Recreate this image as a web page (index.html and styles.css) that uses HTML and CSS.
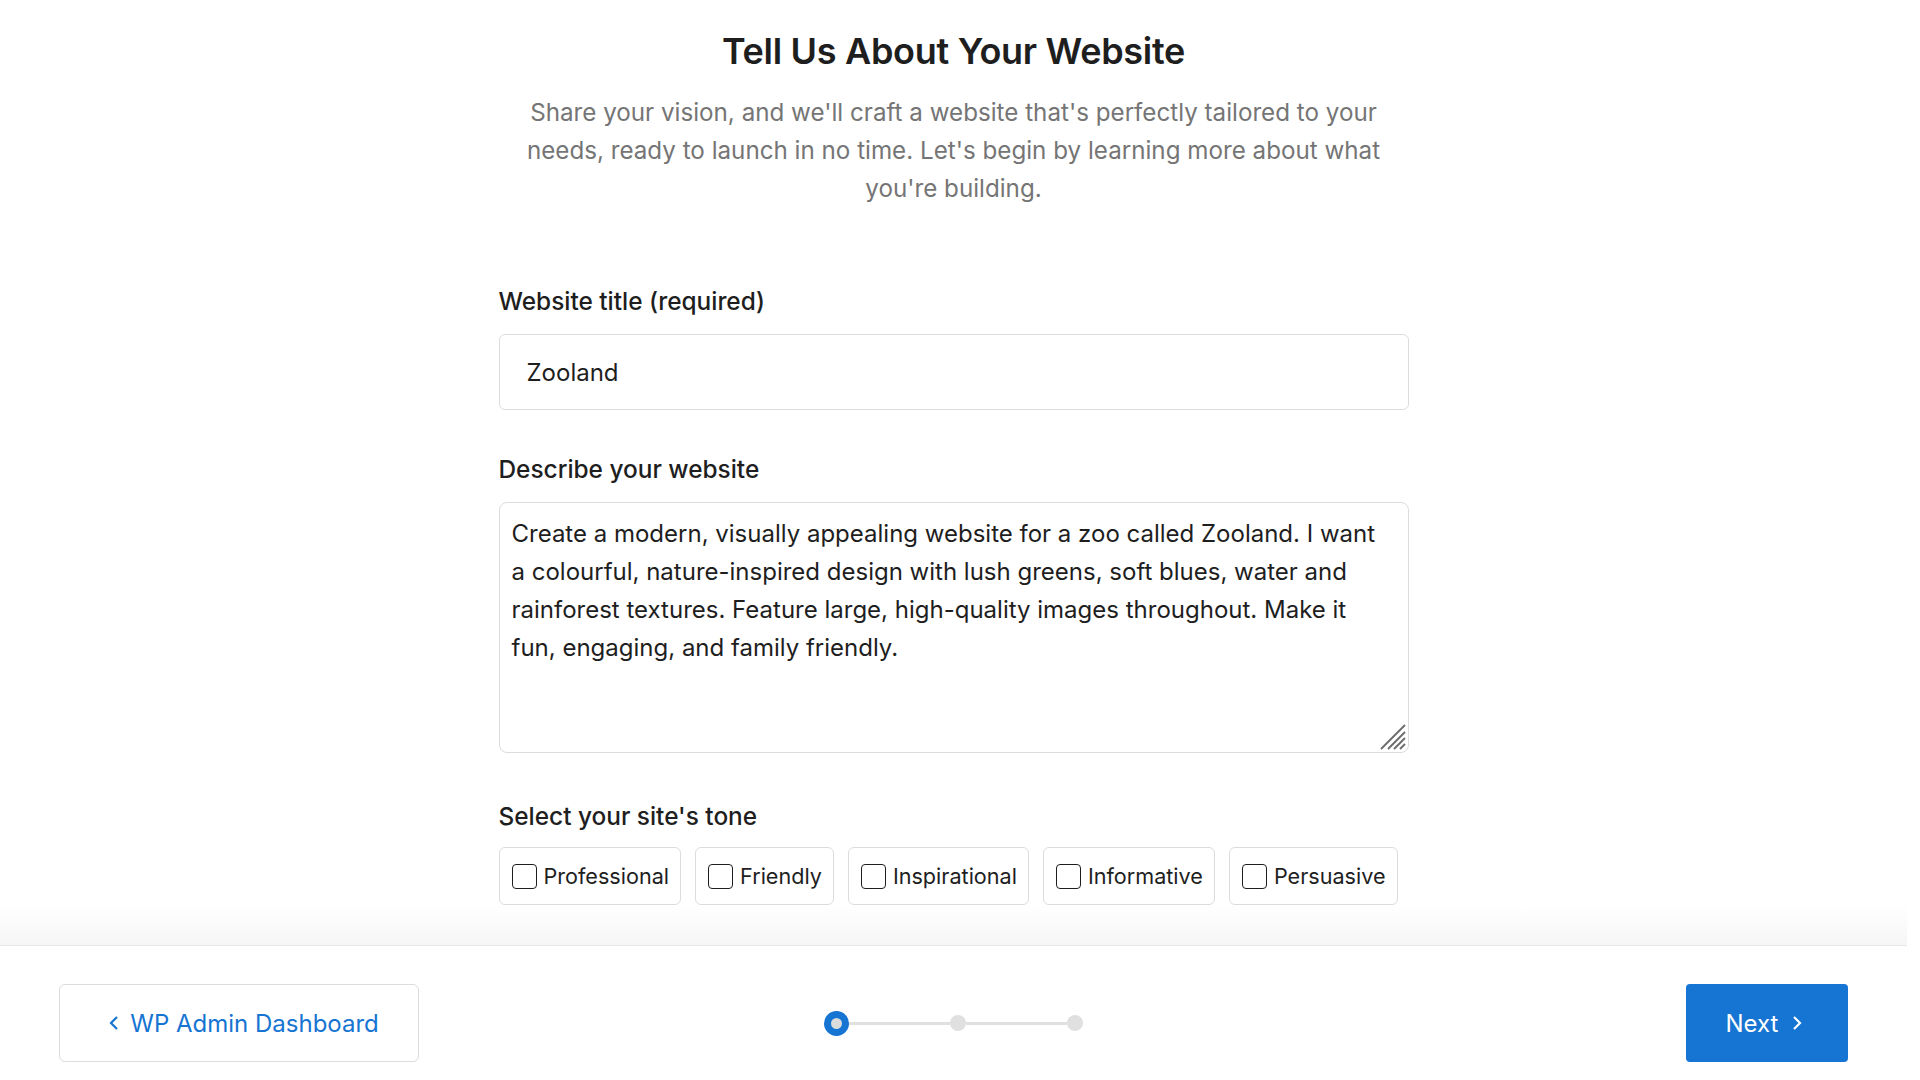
FILE: index.html
```html
<!DOCTYPE html>
<html lang="en">
<head>
    <meta charset="UTF-8">
    <meta name="viewport" content="width=device-width, initial-scale=1.0">
    <title>Tell Us About Your Website</title>
    <link rel="stylesheet" href="styles.css">
</head>
<body>
    <div class="app">
        <main class="main">
            <div class="intro">
                <h1>Tell Us About Your Website</h1>
                <p class="lead">Share your vision, and we'll craft a website that's perfectly tailored to your needs, ready to launch in no time. Let's begin by learning more about what you're building.</p>
            </div>

            <form class="form">
                <div class="field">
                    <label class="label" for="site-title">Website title (required)</label>
                    <input class="input" id="site-title" type="text" value="Zooland">
                </div>

                <div class="field">
                    <label class="label" for="site-desc">Describe your website</label>
                    <div class="textarea-wrap">
                        <textarea class="textarea" id="site-desc">Create a modern, visually appealing website for a zoo called Zooland. I want a colourful, nature-inspired design with lush greens, soft blues, water and rainforest textures. Feature large, high-quality images throughout. Make it fun, engaging, and family friendly.</textarea>
                        <svg class="grip" width="26" height="26" viewBox="0 0 26 26">
                            <path d="M1 25 L25 1 M8 25 L25 8 M14 25 L25 14 M20 25 L25 20" stroke="#6b6b6b" stroke-width="1.8" fill="none"/>
                        </svg>
                    </div>
                </div>

                <div class="field">
                    <span class="label">Select your site's tone</span>
                    <div class="tones">
                        <label class="tone"><input type="checkbox"><span class="box"></span>Professional</label>
                        <label class="tone"><input type="checkbox"><span class="box"></span>Friendly</label>
                        <label class="tone"><input type="checkbox"><span class="box"></span>Inspirational</label>
                        <label class="tone"><input type="checkbox"><span class="box"></span>Informative</label>
                        <label class="tone"><input type="checkbox"><span class="box"></span>Persuasive</label>
                    </div>
                </div>
            </form>
        </main>

        <footer class="footer">
            <button class="btn btn-back" type="button">
                <svg width="10" height="16" viewBox="0 0 10 16"><path d="M8 2 L2 8 L8 14" stroke="currentColor" stroke-width="2.2" fill="none"/></svg>
                WP Admin Dashboard
            </button>

            <div class="steps">
                <span class="step active"></span>
                <span class="line"></span>
                <span class="step"></span>
                <span class="line"></span>
                <span class="step"></span>
            </div>

            <button class="btn btn-next" type="button">
                Next
                <svg width="10" height="16" viewBox="0 0 10 16"><path d="M2 2 L8 8 L2 14" stroke="currentColor" stroke-width="2.2" fill="none"/></svg>
            </button>
        </footer>
    </div>
</body>
</html>
```

FILE: styles.css
```css
* {
    margin: 0;
    padding: 0;
    box-sizing: border-box;
}

body {
    font-family: 'Inter', 'Noto Sans', sans-serif;
    color: #1e1e1e;
    background: #ffffff;
    height: 100vh;
    overflow: hidden;
}

.app {
    width: calc(100% - 13px);
    height: 100vh;
    display: flex;
    flex-direction: column;
}

.main {
    flex: 1;
    display: flex;
    flex-direction: column;
    align-items: center;
    padding-top: 29px;
    background: linear-gradient(to bottom, #ffffff calc(100% - 40px), #f6f6f6);
}

.intro {
    width: 880px;
    text-align: center;
}

h1 {
    font-size: 36px;
    line-height: 44px;
    font-weight: 600;
    letter-spacing: -0.3px;
    color: #1e1e1e;
}

.lead {
    margin-top: 21px;
    font-size: 24.2px;
    line-height: 38px;
    color: #757575;
}

.form {
    width: 910px;
    margin-top: 78px;
    display: flex;
    flex-direction: column;
    gap: 44px;
}

.field {
    display: flex;
    flex-direction: column;
}

.label {
    font-size: 24.4px;
    line-height: 30px;
    font-weight: 500;
    margin-bottom: 18px;
}

.input {
    height: 76px;
    padding: 0 27px;
    font-family: inherit;
    font-size: 24px;
    color: #1e1e1e;
    border: 1px solid #dcdcdc;
    border-radius: 6px;
    outline: none;
}

.textarea-wrap {
    position: relative;
}

.textarea {
    display: block;
    width: 100%;
    height: 251px;
    padding: 12px 23px 12px 12px;
    font-family: inherit;
    font-size: 24px;
    line-height: 38px;
    color: #1e1e1e;
    border: 1px solid #dcdcdc;
    border-radius: 8px;
    resize: none;
    outline: none;
}

.grip {
    position: absolute;
    right: 3px;
    bottom: 3px;
}

.field:last-child {
    margin-top: 4px;
}

.field:last-child .label {
    margin-bottom: 16px;
}

.tones {
    display: flex;
    gap: 14px;
}

.tone {
    display: flex;
    align-items: center;
    gap: 7px;
    height: 58px;
    padding: 0 11px 0 12px;
    font-size: 21.6px;
    border: 1px solid #dcdcdc;
    border-radius: 6px;
    cursor: pointer;
}

.tone input {
    display: none;
}

.box {
    width: 25px;
    height: 25px;
    border: 1.5px solid #1e1e1e;
    border-radius: 4px;
    background: #ffffff;
}

.tone input:checked + .box {
    background: #1674d2;
    border-color: #1674d2;
}

.footer {
    height: 135px;
    border-top: 1px solid #e8e8e8;
    background: #ffffff;
    display: grid;
    grid-template-columns: 1fr auto 1fr;
    align-items: start;
    padding: 38px 59px 0;
}

.btn {
    display: flex;
    align-items: center;
    justify-content: center;
    gap: 11px;
    height: 78px;
    font-family: inherit;
    font-size: 24px;
    border-radius: 6px;
    cursor: pointer;
}

.btn-back {
    justify-self: start;
    width: 360px;
    padding-left: 10px;
    background: #ffffff;
    color: #1674d2;
    border: 1px solid #dcdcdc;
}

.btn-next {
    justify-self: end;
    width: 162px;
    padding-right: 6px;
    background: #1674d2;
    color: #ffffff;
    border: none;
    border-radius: 4px;
    gap: 14px;
}

.steps {
    display: flex;
    align-items: center;
    height: 78px;
}

.step {
    width: 16px;
    height: 16px;
    border-radius: 50%;
    background: #e0e0e0;
    flex-shrink: 0;
}

.step.active {
    width: 25px;
    height: 25px;
    background: #dcdcdc;
    border: 7px solid #1674d2;
}

.line {
    width: 101px;
    height: 3px;
    background: #e0e0e0;
}
```
